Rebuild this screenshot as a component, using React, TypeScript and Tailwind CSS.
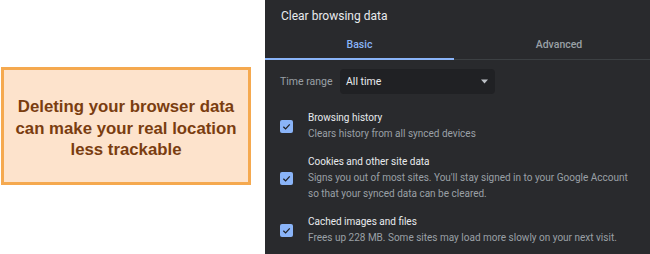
import React from "react";

function Check() {
  return (
    <div className="w-[13px] h-[13px] rounded-[2px] bg-[#8ab4f8] flex items-center justify-center shrink-0">
      <svg width="9" height="9" viewBox="0 0 10 10">
        <path d="M1.5 5.2 L4 7.6 L8.6 2.6" fill="none" stroke="#202124" strokeWidth="1.4" />
      </svg>
    </div>
  );
}

function Item({ title, lines }: { title: string; lines: string[] }) {
  return (
    <div className="flex items-center shrink-0">
      <div className="w-[43px] pl-[15px] shrink-0">
        <Check />
      </div>
      <div>
        <div className="text-[10px] leading-[16px] text-[#e8eaed] whitespace-nowrap">{title}</div>
        {lines.map((l) => (
          <div key={l} className="text-[10px] leading-[16px] text-[#9aa0a6] whitespace-nowrap">{l}</div>
        ))}
      </div>
    </div>
  );
}

export default function App() {
  return (
    <div className="w-[650px] h-[254px] bg-white flex overflow-hidden" style={{ fontFamily: "Roboto, 'Liberation Sans', sans-serif" }}>
      <div className="w-[265px] shrink-0 pt-[67px] pl-[1px]">
        <div
          className="w-[250px] h-[118px] border-[3px] border-[#f5a94f] bg-[#fde3cc] flex items-center justify-center text-center text-[#7a3d10] font-bold text-[16.8px] leading-[21.5px] pt-[5px]"
          style={{ fontFamily: "'Liberation Sans', Arial, sans-serif" }}
        >
          <div>
            Deleting your browser data
            <br />
            can make your real location
            <br />
            less trackable
          </div>
        </div>
      </div>
      <div className="flex-1 bg-[#292a2d] flex flex-col overflow-hidden">
        <div className="h-[31px] shrink-0 pl-[16px] pt-[7px] text-[12px] leading-[18px] text-[#e8eaed]">Clear browsing data</div>
        <div className="flex h-[29px] shrink-0 border-b border-[#3c4043]">
          <div className="w-[189px] flex items-center justify-center text-[10.5px] font-medium text-[#8ab4f8] border-b-2 border-[#8ab4f8] mb-[-1px]">Basic</div>
          <div className="flex-1 flex items-center justify-center pl-[14px] text-[10.5px] font-medium text-[#9aa0a6]">Advanced</div>
        </div>
        <div className="flex items-center mt-[9px] h-[25px] shrink-0">
          <div className="pl-[15px] w-[75px] text-[10.5px] text-[#9aa0a6]">Time range</div>
          <div className="w-[155px] h-[25px] rounded-[4px] bg-[#202124] flex items-center justify-between pl-[6px] pr-[7px]">
            <span className="text-[10.5px] text-[#e8eaed]">All time</span>
            <svg width="7" height="5" viewBox="0 0 7 5">
              <path d="M0 0.5 L7 0.5 L3.5 4.5 Z" fill="#bdc1c6" />
            </svg>
          </div>
        </div>
        <div className="mt-[16px] flex flex-col gap-[12px] shrink-0">
          <Item title="Browsing history" lines={["Clears history from all synced devices"]} />
          <Item
            title="Cookies and other site data"
            lines={["Signs you out of most sites. You'll stay signed in to your Google Account", "so that your synced data can be cleared."]}
          />
          <Item title="Cached images and files" lines={["Frees up 228 MB. Some sites may load more slowly on your next visit."]} />
        </div>
      </div>
    </div>
  );
}
